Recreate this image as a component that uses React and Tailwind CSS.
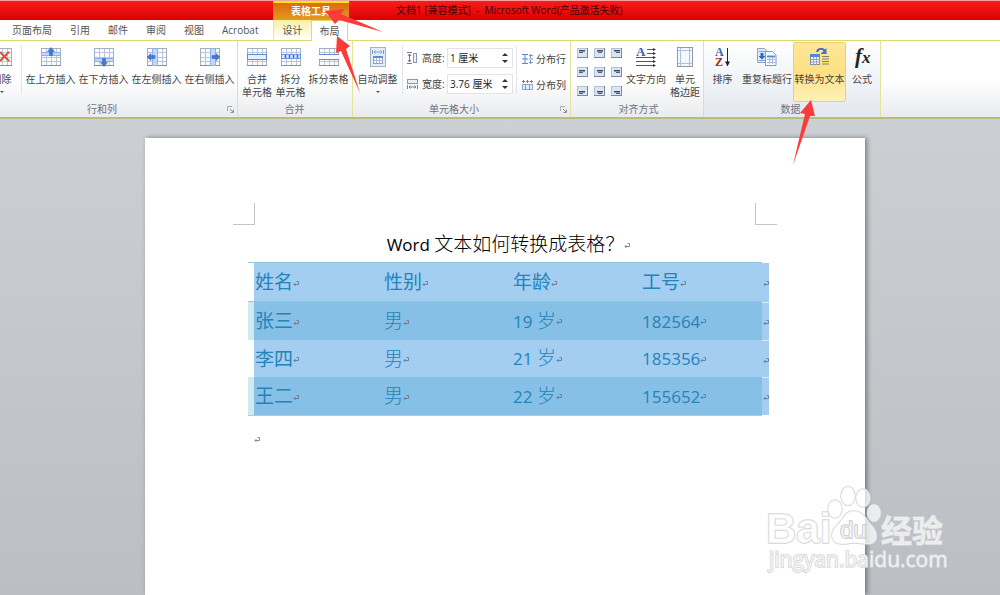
// App.jsx
import React, { useState } from "react";

const tabs = ["页面布局", "引用", "邮件", "审阅", "视图", "Acrobat"];

const students = [
  { name: "张三", gender: "男", age: "19", id: "182564" },
  { name: "李四", gender: "男", age: "21", id: "185356" },
  { name: "王二", gender: "男", age: "22", id: "155652" },
];

/* ---------- icons ---------- */

const Grid = ({ children }) => (
  <svg width="20" height="20" viewBox="0 0 20 20" aria-hidden="true">
    <rect x="0.5" y="1.5" width="19" height="17" fill="#fafbfd" stroke="#a3afc2" />
    <path d="M0 18.5h20" stroke="#8391a8" />
    <path d="M5.5 2v16M10.5 2v16M15.5 2v16M1 5.5h18M1 10.5h18M1 14.5h18" stroke="#bcc6d6" fill="none" />
    {children}
  </svg>
);

const DeleteIcon = () => (
  <Grid>
    <path d="M8 5l9 9M17 5l-9 9" stroke="#ec4a2e" strokeWidth="2" fill="none" />
  </Grid>
);

const InsertIcon = ({ side }) => {
  const band = {
    up: <rect x="0.5" y="5.5" width="19" height="3" />,
    down: <rect x="0.5" y="11.5" width="19" height="3" />,
    left: <rect x="5.5" y="1.5" width="5" height="17" />,
    right: <rect x="10.5" y="1.5" width="5" height="17" />,
  };
  const arrow = {
    up: "M10 0.5l3.5 4h-2v4h-3v-4h-2z",
    down: "M10 19.5l3.5-4h-2v-4h-3v4h-2z",
    left: "M0 10l4-3.500v2h4v3h-4v2z",
    right: "M20 10l-4-3.500v2h-4v3h4v2z",
  };
  return (
    <Grid>
      <g fill="#c3d7fb" stroke="#8fb0ee">{band[side]}</g>
      <path d={arrow[side]} fill="#4379cf" stroke="#3363b4" strokeWidth="0.5" />
    </Grid>
  );
};

const MergeIcon = () => (
  <Grid>
    <rect x="0.5" y="7.5" width="19" height="5" fill="#e9f0fb" stroke="#5f8cda" />
  </Grid>
);

const SplitCellIcon = () => (
  <Grid>
    <rect x="0.5" y="7.5" width="19" height="4" fill="#dbe7fb" stroke="#6f98de" />
    <path d="M4.5 8v3M8.500 8v3M12.500 8v3M16.500 8v3" stroke="#3a6ac2" strokeWidth="1.5" />
  </Grid>
);

const SplitTableIcon = () => (
  <Grid>
    <rect x="0" y="8" width="20" height="4" fill="#fff" />
    <path d="M0 7.500h20M0 12.500h20" stroke="#5f8cda" />
  </Grid>
);

const AutoFitIcon = () => (
  <svg width="16" height="20" viewBox="0 0 16 20" aria-hidden="true">
    <rect x="0.5" y="0.5" width="15" height="19" fill="#e4ecf7" stroke="#a3b1c6" />
    <path d="M2.500 3v4M13.500 3v4" stroke="#8795ab" />
    <path d="M4 5h8M5.500 3.500L4 5l1.500 1.500M10.500 3.500L12 5l-1.500 1.500" stroke="#6a8fce" strokeWidth="0.8" fill="none" />
    <rect x="3.500" y="9.500" width="9" height="7" fill="#fff" stroke="#8ba0c4" />
    <path d="M3 10h10" stroke="#5f8cda" strokeWidth="2" />
    <path d="M6.500 11v5M9.500 11v5M4 13.500h9" stroke="#a9b8d0" />
  </svg>
);

const HeightIcon = () => (
  <svg width="11" height="12" viewBox="0 0 11 12" aria-hidden="true">
    <path d="M0 0.500h5M0 11.500h5M2.500 2v8M1 4l1.500-2L4 4M1 8l1.500 2L4 8" stroke="#6b6f76" strokeWidth="0.9" fill="none" />
    <rect x="6.500" y="1.500" width="3" height="9" fill="#e8effa" stroke="#8398bd" />
  </svg>
);

const WidthIcon = () => (
  <svg width="11" height="12" viewBox="0 0 11 12" aria-hidden="true">
    <rect x="0.5" y="1.5" width="10" height="4" fill="#e8effa" stroke="#8398bd" />
    <path d="M0.500 7v4M10.500 7v4M2 9h7M3.500 7.500L2 9l1.500 1.500M7.500 7.500L9 9l-1.500 1.500" stroke="#6b6f76" strokeWidth="0.9" fill="none" />
  </svg>
);

const RowsIcon = () => (
  <svg width="11" height="12" viewBox="0 0 11 12" aria-hidden="true">
    <path d="M0 1.500h6M0 6h6M0 10.500h6M3 1v10" stroke="#5f86cc" fill="none" />
    <path d="M8.500 1v4M8.500 7v4M7 2.500h4M7 6h4M7 9.500h4" stroke="#7796d0" fill="none" />
  </svg>
);

const ColumnsIcon = () => (
  <svg width="11" height="12" viewBox="0 0 11 12" aria-hidden="true">
    <path d="M0 2.500h3M4 2.500h3M8 2.500h3M1.500 1v3M5.500 1v3M9.500 1v3" stroke="#5f86cc" fill="none" />
    <rect x="0.5" y="5.5" width="10" height="5" fill="#e8effa" stroke="#93a9d0" />
    <path d="M3.500 5v6M7.500 5v6" stroke="#7796d0" fill="none" />
  </svg>
);

const AlignIcon = ({ h, v }) => {
  const x = { left: 2, center: 3, right: 3 }[h];
  const short = { left: 2, center: 4, right: 5 }[h];
  const y = { top: 2, middle: 3, bottom: 5 }[v];
  return (
    <svg width="11" height="10" viewBox="0 0 11 10" aria-hidden="true">
      <rect x="0.5" y="0.5" width="10" height="9" fill="#d9e5f6" stroke="#b4c1d6" />
      <path d="M0 9.500h11M10.500 0v10" stroke="#7488a8" />
      <rect x={x} y={y} width="6" height="1.500" fill="#444a55" />
      <rect x={short} y={y + 2} width="4" height="1" fill="#5a606b" />
    </svg>
  );
};

const DirectionIcon = () => (
  <svg className="overflow-visible" width="20" height="20" viewBox="0 0 20 20" aria-hidden="true">
    <text x="0" y="9" fontFamily="Liberation Serif, serif" fontWeight="bold" fontSize="13" fill="#2f62b8">A</text>
    <path d="M11 2.500h7M11 6.500h7M0 10.500h18M0 14.500h18M0 18.500h18" stroke="#555" />
    <path d="M17 1l3 1.500-3 1.500zM17 5l3 1.500-3 1.500zM17 9l3 1.500-3 1.500zM17 13l3 1.500-3 1.500zM17 17l3 1.500-3 1.500z" fill="#333" />
  </svg>
);

const MarginIcon = () => (
  <svg width="16" height="20" viewBox="0 0 16 20" aria-hidden="true">
    <rect x="0.5" y="0.5" width="15" height="19" fill="#f4f7fb" stroke="#8d9bb2" />
    <path d="M3.500 1v18M12.500 1v18M1 3.500h14M1 16.500h14" stroke="#a9c1e2" />
  </svg>
);

const SortIcon = () => (
  <svg className="overflow-visible" width="16" height="20" viewBox="0 0 16 20" aria-hidden="true">
    <g fontFamily="Liberation Serif, serif" fontWeight="bold" fontSize="12">
      <text x="0" y="9" fill="#3b62a8">A</text>
      <text x="0" y="19" fill="#93302d">Z</text>
    </g>
    <path d="M12.500 1v15" stroke="#222" />
    <path d="M10 14.500h5l-2.500 5z" fill="#222" />
  </svg>
);

const RepeatIcon = () => (
  <svg width="20" height="20" viewBox="0 0 20 20" aria-hidden="true">
    <path d="M0.500 1.500h7l3 3v11h-10z" fill="#dfe9f8" stroke="#8fa6cc" />
    <path d="M2 4.500h6M2 13.500h6" stroke="#7b9dd8" />
    <path d="M3.500 6h3v3H8.500l-3.500 3.500-3.500-3.500h2z" fill="#2f66c6" />
    <path d="M8.500 4.500h7l3.500 3.500v10.500h-10.500z" fill="#fff" stroke="#8297ba" />
    <path d="M10 9.500h8" stroke="#5a8ae0" strokeWidth="2" />
    <path d="M10 12.500h8M10 15.500h8M12.500 10v7M15.500 10v7" stroke="#a9bad6" />
  </svg>
);

const ConvertIcon = () => (
  <svg width="20" height="20" viewBox="0 0 20 20" aria-hidden="true">
    <rect x="0.5" y="7.500" width="9" height="10" fill="#eef3fb" stroke="#7d8ca6" />
    <path d="M0 8.500h10" stroke="#5585da" strokeWidth="3" />
    <path d="M3.500 10v8M6.500 10v8M1 12.500h9M1 15h9" stroke="#9aa8bd" />
    <path d="M12 9.500h7M12 12h7M12 14.500h7M12 17h7" stroke="#857f68" />
    <path d="M7 5c1-4 6-4 8-1" stroke="#3a6cc8" strokeWidth="2" fill="none" />
    <path d="M16.500 1v6h-6z" fill="#3f74cf" />
  </svg>
);

const FormulaIcon = () => (
  <svg className="overflow-visible" width="20" height="20" viewBox="0 0 20 20" aria-hidden="true">
    <text x="3" y="16" fontFamily="Liberation Serif, serif" fontStyle="italic" fontWeight="bold" fill="#222" fontSize="21">
      f<tspan fontSize="17">x</tspan>
    </text>
  </svg>
);

const Launcher = () => (
  <svg width="7" height="7" viewBox="0 0 7 7" aria-hidden="true">
    <path d="M0.500 5V0.500H5" stroke="#a9adb4" fill="none" />
    <path d="M3 3l3 3M6.500 3.500v3h-3" stroke="#8d9299" fill="none" />
  </svg>
);

const ParaMark = () => (
  <svg className="inline-block" width="6" height="6" viewBox="0 0 6 6" aria-hidden="true">
    <path d="M3.500 0.500H5.500V3.500H1M2.500 2L1 3.500L2.500 5" stroke="#66717e" strokeWidth="0.8" fill="none" />
  </svg>
);

/* ---------- ribbon parts ---------- */

const BigButton = ({ icon, lines, width, active, menu }) => (
  <button
    className={`flex shrink-0 flex-col items-center gap-[6px] rounded-[2px] border pt-1 h-[60px] whitespace-nowrap leading-[13px] ${width} ${
      active
        ? "border-[#f0cf6a] bg-linear-to-b from-[#fde79a] via-[#fde083] to-[#fef1b8]"
        : "border-transparent"
    }`}
  >
    {icon}
    <span className="flex flex-col items-center">
      {lines.map((line) => (
        <span key={line}>{line}</span>
      ))}
      {menu && <span className="mt-[5px] border-x-2 border-t-2 border-x-transparent border-t-[#555]" />}
    </span>
  </button>
);

const Group = ({ label, launcher, className, children }) => (
  <section className={`flex shrink-0 flex-col border-r border-[#e3e39a] ${className}`}>
    <div className="flex flex-1 items-start pt-px">{children}</div>
    <div className="flex h-4 items-center pr-[3px] text-[#70757d]">
      <span className="flex-1 text-center">{label}</span>
      {launcher && (
        <button aria-label={label} className="w-3 flex justify-end">
          <Launcher />
        </button>
      )}
    </div>
  </section>
);

const Divider = () => <div className="h-12 w-px shrink-0 self-start mt-1 bg-[#e2e4e7]" />;

const SizeField = ({ id, icon, label, value, onChange }) => (
  <div className="flex h-5 items-center">
    {icon}
    <label htmlFor={id} className="ml-1 w-[25px] whitespace-nowrap">
      {label}
    </label>
    <div className="flex h-5 w-[66px] border border-[#e2e4e7] bg-white">
      <input
        id={id}
        value={value}
        onChange={(e) => onChange(e.target.value)}
        className="w-[54px] min-w-0 pl-[2px] text-[#222] outline-none"
      />
      <div className="flex flex-col items-center justify-center gap-1">
        <button aria-label={`${label} +`} className="border-x-[3px] border-b-[3px] border-x-transparent border-b-[#333]" />
        <button aria-label={`${label} -`} className="border-x-[3px] border-t-[3px] border-x-transparent border-t-[#333]" />
      </div>
    </div>
  </div>
);

const TitleBar = () => (
  <div className="flex h-5 items-stretch border-t border-[#f4a0a0] bg-linear-to-b from-[#fb1b1b] to-[#d90000] text-[10px]">
    <div className="w-[273px] shrink-0" />
    <div className="flex w-[76px] shrink-0 items-center justify-center border-t-2 border-[#ffe600] bg-linear-to-b from-[#dc6a10] to-[#e39a1c] font-bold text-white">
      表格工具
    </div>
    <h1 className="ml-[47px] flex items-center whitespace-pre text-[#3d0000]">
      文档1 [兼容模式]  -  Microsoft Word(产品激活失败)
    </h1>
  </div>
);

const TabRow = () => (
  <nav className="flex h-[21px] items-stretch border-b border-[#dcdc6e] bg-white text-[#555]">
    <div className="flex w-[273px] shrink-0 items-center gap-[18px] pl-3">
      {tabs.map((tab) => (
        <button key={tab} className="whitespace-nowrap">
          {tab}
        </button>
      ))}
    </div>
    <button className="w-[38px] border-l border-[#e6e6a8] bg-linear-to-b from-[#f8efa0] to-white">设计</button>
    <button className="-mb-px w-[37px] border border-b-0 border-[#dcdc6e] bg-white">布局</button>
  </nav>
);

const Ribbon = () => {
  const [height, setHeight] = useState("1 厘米");
  const [width, setWidth] = useState("3.76 厘米");

  return (
    <div className="flex h-[78px] border-b-2 border-[#b9bd7c] bg-linear-to-b from-white via-white to-[#e9ebee] text-[#444]">
      <Group label="行和列" launcher className="-ml-[18px] w-[256px]">
        <BigButton icon={<DeleteIcon />} lines={["删除"]} width="w-[39px]" menu />
        <Divider />
        <div className="w-[2px]" />
        <BigButton icon={<InsertIcon side="up" />} lines={["在上方插入"]} width="w-[53px]" />
        <BigButton icon={<InsertIcon side="down" />} lines={["在下方插入"]} width="w-[53px]" />
        <BigButton icon={<InsertIcon side="left" />} lines={["在左侧插入"]} width="w-[53px]" />
        <BigButton icon={<InsertIcon side="right" />} lines={["在右侧插入"]} width="w-[53px]" />
      </Group>

      <Group label="合并" className="w-[115px] pl-[2px]">
        <BigButton icon={<MergeIcon />} lines={["合并", "单元格"]} width="w-[34px]" />
        <BigButton icon={<SplitCellIcon />} lines={["拆分", "单元格"]} width="w-[33px]" />
        <BigButton icon={<SplitTableIcon />} lines={["拆分表格"]} width="w-[43px]" />
      </Group>

      <Group label="单元格大小" launcher className="w-[218px]">
        <BigButton icon={<AutoFitIcon />} lines={["自动调整"]} width="w-[49px]" menu />
        <Divider />
        <div className="ml-1 mt-[6px] flex flex-col gap-[6px]">
          <SizeField id="row-height" icon={<HeightIcon />} label="高度:" value={height} onChange={setHeight} />
          <SizeField id="col-width" icon={<WidthIcon />} label="宽度:" value={width} onChange={setWidth} />
        </div>
        <div className="w-[3px]" />
        <Divider />
        <div className="ml-[5px] mt-[7px] flex flex-col gap-[6px]">
          <button className="flex h-5 items-center gap-[3px] whitespace-nowrap">
            <RowsIcon />
            分布行
          </button>
          <button className="flex h-5 items-center gap-[3px] whitespace-nowrap">
            <ColumnsIcon />
            分布列
          </button>
        </div>
      </Group>

      <Group label="对齐方式" className="w-[133px] pl-[6px]">
        <div className="mt-[6px] grid shrink-0 grid-cols-3 gap-x-[6px] gap-y-[9px]">
          {["top", "middle", "bottom"].map((v) =>
            ["left", "center", "right"].map((h) => (
              <button key={v + h} aria-label={`${v} ${h}`}>
                <AlignIcon h={h} v={v} />
              </button>
            ))
          )}
        </div>
        <BigButton icon={<DirectionIcon />} lines={["文字方向"]} width="w-[48px]" />
        <BigButton icon={<MarginIcon />} lines={["单元", "格边距"]} width="w-[30px]" />
      </Group>

      <Group label="数据" className="w-[177px] bg-linear-to-b from-white to-[#e3e8ef]">
        <BigButton icon={<SortIcon />} lines={["排序"]} width="w-[37px]" />
        <BigButton icon={<RepeatIcon />} lines={["重复标题行"]} width="w-[52px]" />
        <BigButton icon={<ConvertIcon />} lines={["转换为文本"]} width="w-[53px]" active />
        <BigButton icon={<FormulaIcon />} lines={["公式"]} width="w-[32px]" />
      </Group>
    </div>
  );
};

/* ---------- document ---------- */

const Latin = ({ children }) => <span className="text-[17px] font-medium">{children}</span>;

const StudentTable = () => (
  <table className="w-full table-fixed border-separate border-spacing-0 text-left text-[19px] font-light leading-6 text-[#2484b8]">
    <colgroup>
      <col className="w-[6px]" />
      <col className="w-[129px]" />
      <col className="w-[129px]" />
      <col className="w-[129px]" />
      <col />
      <col className="w-[7px]" />
    </colgroup>
    <thead>
      <tr className="h-10 bg-[#a3cdf1]">
        <td className="border-y border-[#8fcbdc] bg-white" />
        {["姓名", "性别", "年龄", "工号"].map((title) => (
          <th key={title} className="border-y border-[#8fcbdc] pl-px font-normal">
            {title}
            <ParaMark />
          </th>
        ))}
        <td className="border-t border-white text-right leading-3">
          <ParaMark />
        </td>
      </tr>
    </thead>
    <tbody>
      {students.map((s, i) => (
        <tr key={s.id} className={i % 2 === 0 ? "h-[38px] bg-[#86c0e7]" : "h-[37px] bg-[#a3cdf1]"}>
          <td className={i % 2 === 0 ? "bg-[#d0eaf0]" : "bg-white"} />
          <td className="pl-px font-normal">
            {s.name}
            <ParaMark />
          </td>
          <td className="pl-px">
            {s.gender}
            <ParaMark />
          </td>
          <td className="pl-px">
            <Latin>{s.age} </Latin>岁<ParaMark />
          </td>
          <td className="pl-px">
            <Latin>{s.id}</Latin>
            <ParaMark />
          </td>
          <td className="border-t border-[#d8e9f8] bg-[#a3cdf1] text-right leading-3">
            <ParaMark />
          </td>
        </tr>
      ))}
    </tbody>
  </table>
);

const Page = () => (
  <article className="w-full max-w-[720px] bg-white pt-[65px] font-['Open_Sans','Noto_Sans_CJK_SC',sans-serif] shadow-[2px_0_5px_rgba(0,0,0,0.4)]">
    <div className="flex justify-between px-[88px]">
      <div className="h-[22px] w-[22px] border-b border-r border-[#c4c4c4]" />
      <div className="h-[22px] w-[22px] border-b border-l border-[#c4c4c4]" />
    </div>
    <div className="pl-[103px] pr-[96px]">
      <h2 className="mt-1 mb-[2px] text-center text-[19px] font-light leading-[30px] text-black">
        <Latin>Word </Latin>文本如何转换成表格？
        <ParaMark />
      </h2>
      <StudentTable />
      <div className="mr-[7px] h-px bg-[#9fd3e2]" />
      <p className="pl-[6px] pt-[17px]">
        <ParaMark />
      </p>
    </div>
  </article>
);

/* ---------- overlays ---------- */

const Arrows = () => (
  <svg className="pointer-events-none absolute left-0 top-0" width="1000" height="170" aria-hidden="true">
    <g fill="#fd3a3a">
      <path d="M325 11L344 9L341 14L383 32L339 20L335 24Z" />
      <path d="M337 36L350 46L346 49L360 93L341 51L336 53Z" />
      <path d="M811 100L815 116L810 116L793 165L805 114L800 113Z" />
    </g>
  </svg>
);

const Watermark = () => (
  <svg
    className="pointer-events-none absolute bottom-[17px] right-[50px] overflow-visible"
    width="184"
    height="92"
    viewBox="0 0 184 92"
    role="img"
    aria-label="Baidu"
  >
    <g fill="#fff" fillOpacity="0.7" stroke="#d3d5d7" strokeWidth="1.5" paintOrder="stroke" fontWeight="bold">
      <text x="0" y="57" fontSize="42" fontFamily="Liberation Sans, sans-serif">Bai</text>
      <ellipse cx="69" cy="23" rx="7" ry="9" />
      <ellipse cx="82" cy="10" rx="7" ry="9.500" />
      <ellipse cx="97" cy="12" rx="7" ry="9" />
      <ellipse cx="108" cy="27" rx="6.500" ry="8.500" />
      <path d="M88 25C78 25 78 33 71 39C64 45 63 58 76 58C83 58 84 57 88 57C93 57 96 58 103 58C113 57 112 46 106 40C100 34 98 25 88 25Z" />
      <text x="74" y="52" fontSize="24" fontWeight="normal" fontFamily="Liberation Sans, sans-serif" stroke="#c3c6c9">du</text>
      <text x="115" y="56" fontSize="31" fontFamily="Noto Sans CJK SC, sans-serif">经验</text>
      <text x="3" y="81" fontSize="21" fontWeight="normal" fontFamily="Open Sans, sans-serif">jingyan.baidu.com</text>
    </g>
  </svg>
);

const App = () => {
  return (
    <div className="relative flex min-h-screen flex-col overflow-hidden bg-linear-to-b from-[#d0d3d7] to-[#bbbec3] font-['Open_Sans','Noto_Sans_CJK_SC',sans-serif] text-[10px] leading-[13px]">
      <header>
        <TitleBar />
        <TabRow />
        <Ribbon />
      </header>
      <main className="flex flex-1 justify-center pl-[10px] pt-[19px]">
        <Page />
      </main>
      <Arrows />
      <Watermark />
    </div>
  );
};

export default App;
